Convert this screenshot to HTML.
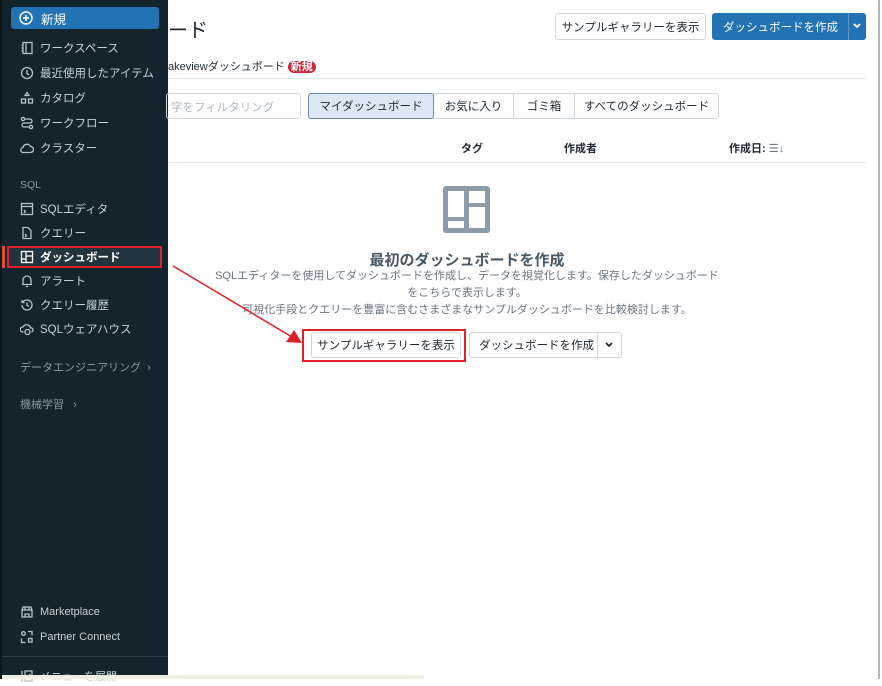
<!DOCTYPE html>
<html><head><meta charset="utf-8"><style>
*{margin:0;padding:0;box-sizing:border-box}
body{width:882px;height:679px;overflow:hidden;background:#fff;position:relative;font-family:"Liberation Sans","Noto Sans CJK JP",sans-serif;}
.abs{position:absolute;white-space:nowrap}
#sb{position:absolute;left:0;top:0;width:168px;height:679px;background:#13242c;border-left:2px solid #0c1a20}
.it{position:absolute;left:18px;color:#c8d0d6;font-size:11.5px;display:flex;align-items:center;height:20px}
.it svg{width:14px;height:14px;margin-right:6px;stroke:#b8c2c8;fill:none;stroke-width:1.3}
.sec{position:absolute;left:18px;color:#8a979f;font-size:10.5px}
.btn{position:absolute;border:1px solid #cfd6dc;border-radius:3px;background:#fff;font-size:11.5px;color:#1f2a33;display:flex;align-items:center;justify-content:center}
.hdr{font-size:11px;font-weight:bold;color:#1f2a33}
</style></head><body>
<div id="sb">
<div class="abs" style="left:9px;top:7px;width:148px;height:22px;background:#2272b4;border-radius:3px;color:#fff;font-size:12.5px;display:flex;align-items:center;padding-left:8px">
<svg width="14" height="14" viewBox="0 0 14 14" style="margin-right:8px"><circle cx="7" cy="7" r="6" stroke="#fff" stroke-width="1.4" fill="none"/><path d="M7 4v6M4 7h6" stroke="#fff" stroke-width="1.4"/></svg>新規</div>
<div class="it" style="top:38px"><svg viewBox="0 0 14 14"><rect x="3" y="1.5" width="9" height="11"/><path d="M6 1.5v11M1.5 4h2M1.5 7h2M1.5 10h2"/></svg>ワークスペース</div>
<div class="it" style="top:63px"><svg viewBox="0 0 14 14"><circle cx="7" cy="7" r="5.5"/><path d="M7 4v3.5l2 1.5"/></svg>最近使用したアイテム</div>
<div class="it" style="top:88px"><svg viewBox="0 0 14 14"><path d="M7 1.5l2 3H5z"/><rect x="1.5" y="8" width="4" height="4"/><rect x="8.5" y="8" width="4" height="4"/></svg>カタログ</div>
<div class="it" style="top:113px"><svg viewBox="0 0 14 14"><circle cx="3" cy="3" r="1.6"/><circle cx="11" cy="11" r="1.6"/><path d="M5 3h5a2 2 0 010 4H4a2 2 0 000 4h5"/></svg>ワークフロー</div>
<div class="it" style="top:138px"><svg viewBox="0 0 14 14"><path d="M3.5 11.5h7a3 3 0 000-6 4 4 0 00-7.5 1 2.5 2.5 0 00.5 5z"/></svg>クラスター</div>
<div class="sec" style="top:179px">SQL</div>
<div class="it" style="top:199px"><svg viewBox="0 0 14 14"><rect x="1.5" y="1.5" width="11" height="11"/><path d="M1.5 4.5h11M4 8l1.5 1.5L4 11"/></svg>SQLエディタ</div>
<div class="it" style="top:223px"><svg viewBox="0 0 14 14"><path d="M3 1.5h5l3 3v8H3zM5 8l1.5 1.5L5 11"/></svg>クエリー</div>
<div class="abs" style="left:5px;top:246px;width:155px;height:22px;background:#22353f;border:2px solid #e0202a"></div>
<div class="abs" style="left:0;top:246px;width:3px;height:22px;background:#e05030"></div>
<div class="it" style="top:247px;color:#fff;font-weight:bold"><svg viewBox="0 0 14 14" style="stroke:#fff"><rect x="1.5" y="1.5" width="11" height="11"/><path d="M6 1.5v11M6 6h6.5M1.5 9h4.5"/></svg>ダッシュボード</div>
<div class="it" style="top:271px"><svg viewBox="0 0 14 14"><path d="M3 10.5V6a4 4 0 018 0v4.5zM2 10.5h10M6 12.5h2"/></svg>アラート</div>
<div class="it" style="top:295px"><svg viewBox="0 0 14 14"><path d="M2 7a5 5 0 105-5 5 5 0 00-4 2M2 2v2.5h2.5M7 4.5V7l2 1.5"/></svg>クエリー履歴</div>
<div class="it" style="top:319px"><svg viewBox="0 0 14 14"><path d="M3.5 10h-1a2.5 2.5 0 01.5-5 4 4 0 017.5 1 2 2 0 011 4"/><circle cx="7.5" cy="10" r="2.5"/></svg>SQLウェアハウス</div>
<div class="sec" style="top:359px;font-size:11px">データエンジニアリング&nbsp;&nbsp;›</div>
<div class="sec" style="top:396px;font-size:11px">機械学習&nbsp;&nbsp;&nbsp;›</div>
<div class="it" style="top:602px;font-size:11px"><svg viewBox="0 0 14 14"><path d="M2 5l1-3h8l1 3v7H2zM2 5h10M5 2v3M9 2v3M5 12V9h4v3"/></svg>Marketplace</div>
<div class="it" style="top:627px;font-size:11px"><svg viewBox="0 0 14 14"><circle cx="3.5" cy="3.5" r="1.8"/><rect x="8.5" y="8.5" width="3.5" height="3.5"/><path d="M8 1.5h4v4M1.5 8.5v4h4"/></svg>Partner Connect</div>
<div class="abs" style="left:0;top:656px;width:166px;height:1px;background:#2c3e47"></div>
<div class="it" style="top:666px;font-size:11px"><svg viewBox="0 0 14 14"><path d="M2 2v11M5 2h7v10H5zM7 7h4M9 5l2 2-2 2"/></svg>メニューを展開</div>
</div>
<div class="abs" style="left:2px;top:675px;width:422px;height:4px;background:#edefe0"></div>
<div class="abs" style="left:878px;top:0;width:2px;height:679px;background:#b5b8ba"></div>

<div class="abs" style="left:168px;top:14px;font-size:20px;color:#1f2a33">ード</div>
<div class="btn" style="left:555px;top:13px;width:151px;height:27px">サンプルギャラリーを表示</div>
<div class="btn" style="left:712px;top:13px;width:154px;height:27px;background:#2272b4;border-color:#2272b4;color:#fff;justify-content:flex-start;padding-left:10px">ダッシュボードを作成</div>
<div class="abs" style="left:848px;top:13px;width:1px;height:27px;background:#5b97c9"></div>
<svg class="abs" style="left:852px;top:22px" width="10" height="8" viewBox="0 0 10 8"><path d="M2 2l3 3 3-3" stroke="#fff" stroke-width="1.8" fill="none"/></svg>
<div class="abs" style="left:168px;top:58px;font-size:11px;color:#1f2a33">akeviewダッシュボード <span style="background:#c8283a;color:#fff;border-radius:7px;padding:0 3px;font-weight:bold;font-size:11px">新規</span></div>
<div class="abs" style="left:168px;top:78px;width:698px;height:1px;background:#e3e8ec"></div>
<div class="abs" style="left:166px;top:93px;width:135px;height:26px;border:1px solid #d3d9de;border-radius:3px;font-size:11.5px;color:#b0b8bf;padding:5px 0 0 4px">字をフィルタリング</div>
<div class="btn" style="left:308px;top:93px;width:126px;height:26px;background:#dce8f4;border-color:#6e8aa6;z-index:2">マイダッシュボード</div>
<div class="btn" style="left:433px;top:93px;width:81px;height:26px;border-radius:0">お気に入り</div>
<div class="btn" style="left:513px;top:93px;width:62px;height:26px;border-radius:0">ゴミ箱</div>
<div class="btn" style="left:574px;top:93px;width:145px;height:26px;border-radius:0 3px 3px 0">すべてのダッシュボード</div>
<div class="abs hdr" style="left:461px;top:140px">タグ</div>
<div class="abs hdr" style="left:564px;top:140px">作成者</div>
<div class="abs hdr" style="left:729px;top:140px">作成日: <span style="font-weight:normal;color:#6b7580">☰↓</span></div>
<div class="abs" style="left:168px;top:162px;width:698px;height:1px;background:#e3e8ec"></div>

<svg class="abs" style="left:443px;top:186px" width="47" height="47" viewBox="0 0 47 47"><rect x="0" y="0" width="47" height="47" rx="3" fill="#8d9ba8"/><rect x="5" y="5" width="16" height="26" fill="#fff"/><rect x="26" y="5" width="16" height="12" fill="#fff"/><rect x="5" y="35" width="16" height="7" fill="#fff"/><rect x="26" y="21" width="16" height="21" fill="#fff"/></svg>
<div class="abs" style="left:167px;width:600px;top:249px;text-align:center;font-size:15px;font-weight:bold;color:#4a5966">最初のダッシュボードを作成</div>
<div class="abs" style="left:167px;width:600px;top:268px;text-align:center;font-size:11px;line-height:17px;color:#6b7580;white-space:normal">SQLエディターを使用してダッシュボードを作成し、データを視覚化します。保存したダッシュボード<br>をこちらで表示します。<br>可視化手段とクエリーを豊富に含むさまざまなサンプルダッシュボードを比較検討します。</div>
<div class="abs" style="left:302px;top:329px;width:164px;height:33px;border:2px solid #e0202a"></div>
<div class="btn" style="left:311px;top:332px;width:150px;height:26px">サンプルギャラリーを表示</div>
<div class="btn" style="left:469px;top:332px;width:153px;height:26px;justify-content:flex-start;padding-left:9px">ダッシュボードを作成</div>
<div class="abs" style="left:597px;top:332px;width:1px;height:26px;background:#cfd6dc"></div>
<svg class="abs" style="left:604px;top:341px" width="10" height="8" viewBox="0 0 10 8"><path d="M2 2l3 3 3-3" stroke="#1f2a33" stroke-width="1.8" fill="none"/></svg>
<svg class="abs" style="left:170px;top:262px" width="135" height="85" viewBox="0 0 135 85"><path d="M3 4L122 75" stroke="#e0202a" stroke-width="1.5"/><path d="M132 81L116 80L124 68Z" fill="#e0202a"/></svg>
</body></html>
